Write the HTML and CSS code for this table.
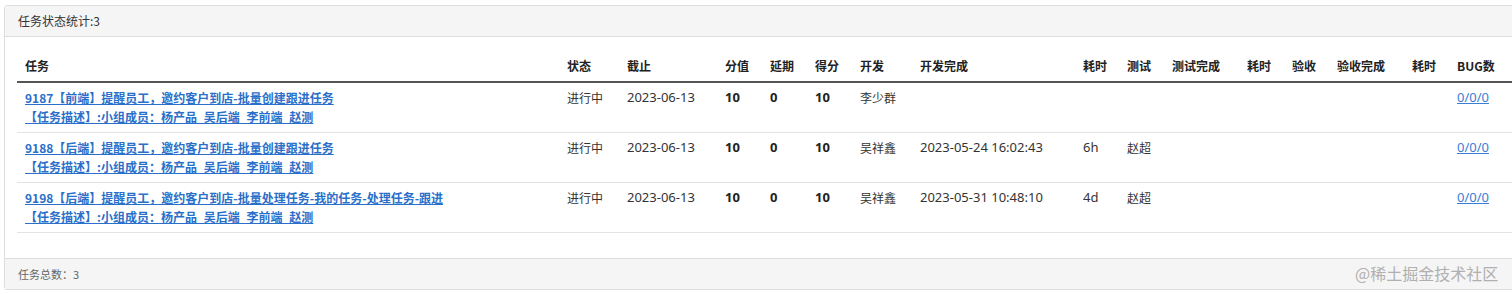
FILE: index.html
```html
<!DOCTYPE html>
<html lang="zh-CN">
<head>
<meta charset="utf-8">
<title>任务状态统计</title>
<link rel="stylesheet" href="styles.css">
</head>
<body>
<div class="panel">
  <div class="panel-heading">任务状态统计:3</div>
  <div class="panel-body">
    <table class="task-table">
      <colgroup>
        <col class="c-task"><col class="c60"><col class="c98"><col class="c45"><col class="c45"><col class="c45"><col class="c60"><col class="c163"><col class="c44"><col class="c45"><col class="c75"><col class="c45"><col class="c45"><col class="c75"><col class="c45"><col class="c-bug">
      </colgroup>
      <thead>
        <tr>
          <th>任务</th><th>状态</th><th>截止</th><th>分值</th><th>延期</th><th>得分</th><th>开发</th><th>开发完成</th><th>耗时</th><th>测试</th><th>测试完成</th><th>耗时</th><th>验收</th><th>验收完成</th><th>耗时</th><th>BUG数</th>
        </tr>
      </thead>
      <tbody>
        <tr>
          <td><a class="task-link" href="#">9187【前端】提醒员工，邀约客户到店-批量创建跟进任务<br>【任务描述】:小组成员：杨产品_吴后端_李前端_赵测</a></td>
          <td>进行中</td><td class="lat">2023-06-13</td><td class="lat num">10</td><td class="lat num">0</td><td class="lat num">10</td><td>李少群</td><td></td><td></td><td></td><td></td><td></td><td></td><td></td><td></td>
          <td class="lat"><a class="bug-link" href="#">0/0/0</a></td>
        </tr>
        <tr>
          <td><a class="task-link" href="#">9188【后端】提醒员工，邀约客户到店-批量创建跟进任务<br>【任务描述】:小组成员：杨产品_吴后端_李前端_赵测</a></td>
          <td>进行中</td><td class="lat">2023-06-13</td><td class="lat num">10</td><td class="lat num">0</td><td class="lat num">10</td><td>吴祥鑫</td><td class="lat">2023-05-24 16:02:43</td><td class="lat">6h</td><td>赵超</td><td></td><td></td><td></td><td></td><td></td>
          <td class="lat"><a class="bug-link" href="#">0/0/0</a></td>
        </tr>
        <tr>
          <td><a class="task-link" href="#">9198【后端】提醒员工，邀约客户到店-批量处理任务-我的任务-处理任务-跟进<br>【任务描述】:小组成员：杨产品_吴后端_李前端_赵测</a></td>
          <td>进行中</td><td class="lat">2023-06-13</td><td class="lat num">10</td><td class="lat num">0</td><td class="lat num">10</td><td>吴祥鑫</td><td class="lat">2023-05-31 10:48:10</td><td class="lat">4d</td><td>赵超</td><td></td><td></td><td></td><td></td><td></td>
          <td class="lat"><a class="bug-link" href="#">0/0/0</a></td>
        </tr>
      </tbody>
    </table>
  </div>
  <div class="panel-footer">任务总数：3<span class="watermark">@稀土掘金技术社区</span></div>
</div>
</body>
</html>
```

FILE: styles.css
```css
html, body {
  margin: 0;
  padding: 0;
  overflow: hidden;
  background: #fff;
}
body {
  padding: 5px 0 0 4px;
  font-family: "Noto Sans CJK SC", "Noto Sans", sans-serif;
  font-size: 12px;
  color: #333;
}
.panel {
  width: 1540px;
  border: 1px solid #ddd;
  border-radius: 3px;
  background: #fff;
  position: relative;
  box-shadow: 0 1px 1px rgba(0,0,0,0.05);
}
.panel-heading {
  background: #f5f5f5;
  border-bottom: 1px solid #ddd;
  padding: 0 13px;
  height: 30px;
  line-height: 30px;
  color: #333;
}
.panel-body {
  padding: 15px 12px 25px;
}
.task-table {
  border-collapse: collapse;
  table-layout: fixed;
  width: 1512px;
}
.c-task { width: 542px; }
.c60 { width: 60px; }
.c98 { width: 98px; }
.c45 { width: 45px; }
.c44 { width: 44px; }
.c75 { width: 75px; }
.c163 { width: 163px; }
.c-bug { width: 80px; }
.task-table th {
  text-align: left;
  font-weight: bold;
  padding: 5px 8px 6px;
  line-height: 18px;
  border-bottom: 2px solid #555;
  white-space: nowrap;
  color: #222;
}
.task-table td {
  padding: 5px 8px 6px;
  line-height: 19px;
  vertical-align: top;
  border-bottom: 1px solid #e3e3e3;
  white-space: nowrap;
  color: #333;
}
.task-table td.lat {
  font-family: "Noto Sans", "Noto Sans CJK SC", sans-serif;
  font-size: 13px;
}
.task-table td.num {
  font-weight: bold;
  color: #222;
}
.task-link {
  color: #2a6fc9;
  font-weight: bold;
  text-decoration: underline;
}
.bug-link {
  color: #3b7dd8;
  text-decoration: underline;
}
.panel-footer {
  background: #f5f5f5;
  border-top: 1px solid #ddd;
  padding: 0 13px;
  height: 30px;
  line-height: 30px;
  font-size: 11px;
  color: #666;
  position: relative;
}
.watermark {
  position: absolute;
  left: 1350px;
  top: 0;
  font-size: 16px;
  color: #b0b0b0;
  line-height: 28px;
}
```
